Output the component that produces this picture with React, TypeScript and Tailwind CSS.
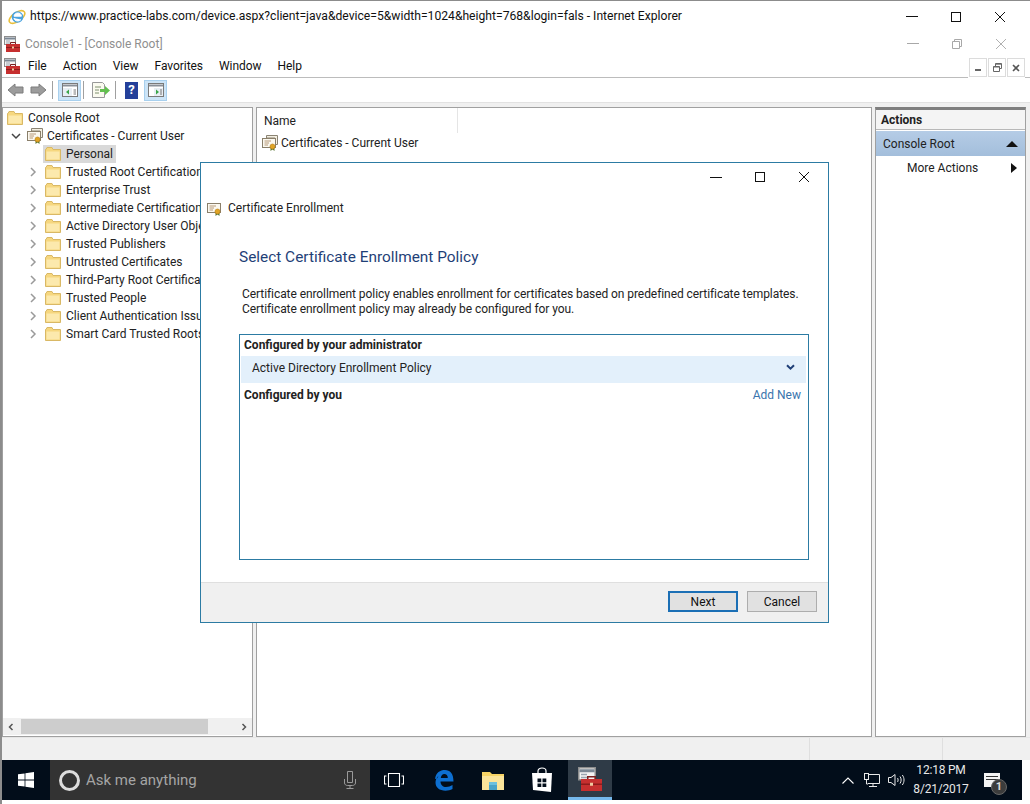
import React from 'react';

const treeItems = [
  'Trusted Root Certification',
  'Enterprise Trust',
  'Intermediate Certification',
  'Active Directory User Obje',
  'Trusted Publishers',
  'Untrusted Certificates',
  'Third-Party Root Certifica',
  'Trusted People',
  'Client Authentication Issu',
  'Smart Card Trusted Roots',
];

const Folder = () => (
  <svg width="16" height="14" viewBox="0 0 16 14" className="shrink-0">
    <path d="M.5 2.5V13.5H15.5V2.5H8L7 .5H2L1 2.5Z" fill="#f6d77f" stroke="#d9b865" />
    <path d="M1.5 4.5H14.5V12.5H1.5Z" fill="#fce9ad" />
  </svg>
);

const Cert = ({ stacked = false }: { stacked?: boolean }) => (
  <svg width="16" height="16" viewBox="0 0 16 16" className="shrink-0">
    {stacked && <path d="M4.5 .5H15.5V9.5H13V3H4.5Z" fill="#f4efe2" stroke="#8a8373" />}
    <rect x=".5" y="3.5" width="13" height="9" fill="#fbf8ef" stroke="#8a7f6a" />
    <path d="M2.5 6H9M2.5 8H7M2.5 10H6" stroke="#b79a7a" />
    <path d="M8.5 12.5V16L10.5 14.5L12.5 16V12.5Z" fill="#5d7a3a" />
    <circle cx="10.5" cy="11.5" r="2.5" fill="#e0a526" stroke="#b87c14" strokeWidth=".6" />
  </svg>
);

const Chevron = ({ open = false }: { open?: boolean }) => (
  <svg width="10" height="10" viewBox="0 0 10 10" className="shrink-0">
    <path d={open ? 'M1 3L5 7L9 3' : 'M3 1L7 5L3 9'} fill="none" stroke={open ? '#444' : '#9a9a9a'} strokeWidth="1.5" />
  </svg>
);

const Toolbox = ({ size = 16 }: { size?: number }) => (
  <svg width={size} height={size} viewBox="0 0 16 16" className="shrink-0">
    <rect x="0.5" y="0.5" width="11" height="8" fill="#f3f3f3" stroke="#8d8d8d" />
    <path d="M1 2.5H11" stroke="#7a8794" strokeWidth="2" />
    <path d="M2 5H6M2 7H6" stroke="#9aa5b0" />
    <path d="M6.5 8V6.5H11.5V8" fill="none" stroke="#7a1f1f" />
    <rect x="2" y="8" width="14" height="8" fill="#c62f2f" />
    <path d="M2 11.5H16" stroke="#8d1c1c" />
    <rect x="8" y="10.5" width="2" height="2" fill="#f0c9a0" />
  </svg>
);

const PanelIcon = ({ mirror = false }: { mirror?: boolean }) => (
  <div className="w-[23px] h-[21px] bg-[#cce4f7] border border-[#a8d0ee] flex items-center justify-center shrink-0">
    <svg width="16" height="14" viewBox="0 0 16 14">
      <rect x=".5" y=".5" width="15" height="13" fill="#fff" stroke="#7a7a7a" />
      <path d="M1 2.5H15" stroke="#8a9099" strokeWidth="2" />
      <path d={mirror ? 'M6 5H15V13H6Z' : 'M1 5H10V13H1Z'} fill="#e8eef4" />
      <path d={mirror ? 'M8 6.5L11 9L8 11.5Z' : 'M7 6.5L4 9L7 11.5Z'} fill="#3aa648" />
      <path d={mirror ? 'M12 7H14M12 9H14M12 11H14' : 'M11.5 7H14M11.5 9H14M11.5 11H14'} stroke="#777" />
    </svg>
  </div>
);

const Arrow = ({ right = false }: { right?: boolean }) => (
  <svg width="17" height="14" viewBox="0 0 17 14" className="shrink-0">
    <path
      d={right ? 'M1 4H9V1L16 7L9 13V10H1Z' : 'M16 4H8V1L1 7L8 13V10H16Z'}
      fill="#9c9c9c"
      stroke="#7d7d7d"
    />
  </svg>
);

const CaptionX = ({ color = '#111' }: { color?: string }) => (
  <svg width="12" height="12" viewBox="0 0 12 12">
    <path d="M1 1L11 11M11 1L1 11" stroke={color} strokeWidth="1" />
  </svg>
);

export default function App() {
  return (
    <div
      className="relative w-[1030px] h-[804px] overflow-hidden bg-white flex flex-col text-[12px] text-[#222] border-l-2 border-t border-[#8c8c8c]"
      style={{ fontFamily: 'Roboto, "Noto Sans", sans-serif' }}
    >
      {/* IE title bar */}
      <div className="h-[31px] shrink-0 flex items-center pl-[6px] pr-[24px] text-[#111]">
        <svg width="18" height="18" viewBox="0 0 18 18" className="shrink-0">
          <ellipse cx="9" cy="9" rx="9" ry="4.5" transform="rotate(-35 9 9)" fill="none" stroke="#e9bf3c" strokeWidth="1.6" />
          <circle cx="9.5" cy="9" r="5.8" fill="#4aa3e0" />
          <path d="M6 8.2H13.4C13.2 5.9 11.8 5 9.7 5C7.8 5 6.2 6.4 6 8.2ZM6 10C6.2 12 7.8 13 9.6 13C11 13 12 12.5 13 11.5" fill="#fff" stroke="#fff" />
          <rect x="7.5" y="9" width="6" height="1.2" fill="#4aa3e0" />
        </svg>
        <span className="ml-[4px] text-[12.15px] whitespace-nowrap">
          https://www.practice-labs.com/device.aspx?client=java&amp;device=5&amp;width=1024&amp;height=768&amp;login=fals - Internet Explorer
        </span>
        <div className="ml-auto flex items-center gap-[33px]">
          <div className="w-[12px] h-px bg-[#111]" />
          <div className="w-[10px] h-[10px] border border-[#111]" />
          <CaptionX />
        </div>
      </div>

      {/* MMC title */}
      <div className="h-[23px] shrink-0 flex items-center pl-[2px] pr-[23px]">
        <Toolbox />
        <span className="ml-[5px] text-[#8f8f8f]">Console1 - [Console Root]</span>
        <div className="ml-auto flex items-center gap-[33px]">
          <div className="w-[12px] h-px bg-[#a8a8a8]" />
          <svg width="10" height="10" viewBox="0 0 10 10">
            <path d="M.5 2.5H7.5V9.5H.5ZM2.5 2.5V.5H9.5V7.5H7.5" fill="none" stroke="#a8a8a8" />
          </svg>
          <CaptionX color="#b0b0b0" />
        </div>
      </div>

      {/* Menu */}
      <div className="h-[23px] shrink-0 flex items-center pl-[2px] border-b border-[#bcbcbc] relative">
        <Toolbox />
        <div className="ml-[8px] flex gap-[16px] text-[#111] tracking-[-0.05px]">
          <span>File</span>
          <span>Action</span>
          <span>View</span>
          <span>Favorites</span>
          <span>Window</span>
          <span>Help</span>
        </div>
        <div className="absolute right-[5px] top-[1px] h-[23px] flex items-center gap-[1px] bg-white pl-[1px]">
          <div className="w-[18px] h-[19px] border border-[#dcdcdc] flex items-end justify-center pb-[5px]">
            <div className="w-[6px] h-[2px] bg-[#666]" />
          </div>
          <div className="w-[18px] h-[19px] border border-[#dcdcdc] flex items-center justify-center">
            <svg width="9" height="9" viewBox="0 0 9 9">
              <path d="M.5 3.5H6.5V8.5H.5ZM2.5 3V.5H8.5V5.5H6.5M.5 4H6.5M2.5 1.2H8.5" fill="none" stroke="#666" />
            </svg>
          </div>
          <div className="w-[18px] h-[19px] border border-[#dcdcdc] flex items-center justify-center">
            <svg width="8" height="8" viewBox="0 0 8 8">
              <path d="M1 1L7 7M7 1L1 7" stroke="#555" strokeWidth="1.6" />
            </svg>
          </div>
        </div>
      </div>

      {/* Toolbar */}
      <div className="h-[25px] shrink-0 flex items-center pl-[5px] border-b border-[#e2e2e2]">
        <Arrow />
        <div className="ml-[6px]"><Arrow right /></div>
        <div className="ml-[5px] w-px h-[18px] bg-[#a0a0a0]" />
        <div className="ml-[5px]"><PanelIcon /></div>
        <div className="ml-[2px] w-px h-[18px] bg-[#a0a0a0]" />
        <svg width="18" height="16" viewBox="0 0 18 16" className="ml-[8px]">
          <path d="M.5 .5H10.5L12.5 2.5V15.5H.5Z" fill="#fbfbf0" stroke="#999" />
          <path d="M3 5H9M3 8H7M3 11H7" stroke="#7f8f6f" />
          <path d="M8 7H13V4L18 8.5L13 13V10H8Z" fill="#63c04f" />
        </svg>
        <div className="ml-[5px] w-px h-[18px] bg-[#a0a0a0]" />
        <div className="ml-[9px] w-[13px] h-[17px] bg-[#24409a] flex items-center justify-center text-white font-bold text-[13px]">?</div>
        <div className="ml-[6px]"><PanelIcon mirror /></div>
      </div>

      {/* Panes */}
      <div className="h-[634px] shrink-0 pt-[4px] flex gap-[3px] bg-[#f0f0f0] pr-[3px]">
        <div className="w-[251px] border border-[#a0a0a0] bg-white flex flex-col">
          <div className="flex-1 whitespace-nowrap pt-px">
            <div className="h-[18px] flex items-center pl-[4px] gap-[5px]">
              <Folder />
              <span>Console Root</span>
            </div>
            <div className="h-[18px] flex items-center pl-[8px]">
              <Chevron open />
              <div className="ml-[6px]"><Cert stacked /></div>
              <span className="ml-[4px]">Certificates - Current User</span>
            </div>
            <div className="h-[18px] flex items-center pl-[40px]">
              <div className="h-[18px] flex items-center gap-[5px] pl-[2px] pr-[3px] bg-[#d9d9d9]">
                <Folder />
                <span>Personal</span>
              </div>
            </div>
            {treeItems.map((name) => (
              <div key={name} className="h-[18px] flex items-center pl-[25px]">
                <Chevron />
                <div className="ml-[7px]"><Folder /></div>
                <span className="ml-[5px]">{name}</span>
              </div>
            ))}
          </div>
          <div className="h-[17px] mb-[1px] bg-[#f0f0f0] flex items-center justify-between px-[4px] relative">
            <svg width="8" height="8" viewBox="0 0 8 8"><path d="M5.5 1L2.5 4L5.5 7" fill="none" stroke="#555" strokeWidth="1.5" /></svg>
            <div className="absolute left-[18px] w-[187px] h-[15px] top-[1px] bg-[#cdcdcd]" />
            <svg width="8" height="8" viewBox="0 0 8 8"><path d="M2.5 1L5.5 4L2.5 7" fill="none" stroke="#555" strokeWidth="1.5" /></svg>
          </div>
        </div>

        <div className="w-[616px] border border-[#a0a0a0] bg-white">
          <div className="h-[25px] flex items-center pl-[7px]">
            <span className="w-[194px] h-full flex items-center border-r border-[#e5e5e5]">Name</span>
          </div>
          <div className="h-[18px] mt-px flex items-center pl-[5px] gap-[3px]">
            <Cert stacked />
            <span>Certificates - Current User</span>
          </div>
        </div>

        <div className="w-[151px] border border-[#a0a0a0] border-t-[3px] border-t-[#7f7f7f] bg-white">
          <div className="h-[20px] flex items-center pl-[5px] font-bold bg-[#f4f4f4] border-b border-[#b8b8b8]">Actions</div>
          <div className="mt-px h-[25px] flex items-center justify-between pl-[7px] pr-[7px] bg-gradient-to-b from-[#b5cce6] to-[#a3bedb]">
            <span>Console Root</span>
            <svg width="12" height="6" viewBox="0 0 12 6"><path d="M6 0L12 6H0Z" fill="#111" /></svg>
          </div>
          <div className="h-[23px] flex items-center justify-between pl-[31px] pr-[8px]">
            <span>More Actions</span>
            <svg width="6" height="10" viewBox="0 0 6 10"><path d="M0 0L6 5L0 10Z" fill="#111" /></svg>
          </div>
        </div>
      </div>

      {/* Status bar */}
      <div className="h-[23px] shrink-0 bg-[#f0f0f0] flex justify-end pr-[3px] border-t border-[#e6e6e6]">
        <div className="w-[134px] border-l border-r border-[#dfdfdf]" />
        <div className="w-[84px]" />
      </div>

      {/* Taskbar */}
      <div className="h-[40px] shrink-0 mr-[8px] bg-[#020d1a] flex items-center text-white">
        <div className="w-[48px] flex justify-center">
          <svg width="16" height="16" viewBox="0 0 16 16"><path d="M0 2.3L6.6 1.4V7.6H0ZM7.4 1.3L16 0V7.6H7.4ZM0 8.4H6.6V14.6L0 13.7ZM7.4 8.4H16V16L7.4 14.7Z" fill="#fff" /></svg>
        </div>
        <div className="w-[320px] h-full bg-[#333] flex items-center pl-[9px] pr-[14px]">
          <div className="w-[21px] h-[21px] rounded-full border-[3px] border-[#dcdcdc]" />
          <span className="ml-[6px] text-[15px] text-[#a5a5a5]">Ask me anything</span>
          <svg width="12" height="18" viewBox="0 0 12 18" className="ml-auto">
            <path d="M3.5 .5H8.5V11.5H3.5ZM.5 8V12C.5 13.5 2 14.5 3.5 14.5H8.5C10 14.5 11.5 13.5 11.5 12V8M6 14.5V17.5M2.5 17.5H9.5" fill="none" stroke="#9a9a9a" />
          </svg>
        </div>
        <div className="ml-[14px] w-[20px] flex justify-center">
          <svg width="20" height="16" viewBox="0 0 20 16"><path d="M4.5 1.5H15.5V14.5H4.5ZM2.5 4H.5V12H2.5M17.5 4H19.5V12H17.5" fill="none" stroke="#fff" strokeWidth="1.1" /></svg>
        </div>
        <div className="ml-[28px] w-[24px] flex justify-center">
          <svg width="20" height="22" viewBox="0 0 20 22">
            <path d="M1 10C2 3.5 6 1 11 1C16 1 19.5 4.5 19.5 12.5H6.5C6.5 16 9 18 12 18C14.5 18 16.5 17.3 18.5 16V20C16.5 21.2 14 21.7 11.5 21.7C5.5 21.7 1.5 18.5 1.5 13.5C1.5 11 2.5 8.5 5 6.5C4 7.8 3.5 8.5 3.2 9.2ZM6.8 9H13.8C13.8 6.5 12.3 5 10.3 5C8.3 5 7 6.7 6.8 9Z" fill="#0d6fd1" fillRule="evenodd" />
          </svg>
        </div>
        <div className="ml-[26px] w-[22px]">
          <svg width="22" height="20" viewBox="0 0 22 20">
            <path d="M0 2H8L10 4H22V20H0Z" fill="#f6d365" />
            <path d="M0 6H22V20H0Z" fill="#fbe49a" />
            <path d="M7 14H15V20H7Z" fill="#4aa3c8" />
            <path d="M7 12H15V15H7Z" fill="#6cc0de" />
          </svg>
        </div>
        <div className="ml-[27px] w-[22px]">
          <svg width="22" height="26" viewBox="0 0 22 26">
            <path d="M7 6V4C7 2 9 1 11 1C13 1 15 2 15 4V6" fill="none" stroke="#fff" strokeWidth="1.2" />
            <path d="M1 6H21L20 25L2 23Z" fill="#fff" />
            <path d="M6.5 11.5H10.3V15.2H6.5ZM11.5 11.5H15.3V15.2H11.5ZM6.5 16.4H10.3V20H6.5ZM11.5 16.4H15.3V20H11.5Z" fill="#020d1a" />
          </svg>
        </div>
        <div className="ml-[15px] w-[44px] h-full bg-[#2f3b47] border-b-[3px] border-[#76b9ed] flex items-center justify-center">
          <Toolbox size={24} />
        </div>
        <div className="ml-auto flex items-center text-[#e8e8e8]">
          <svg width="12" height="7" viewBox="0 0 12 7"><path d="M.5 6.5L6 1L11.5 6.5" fill="none" stroke="#fff" strokeWidth="1.1" /></svg>
          <svg width="16" height="14" viewBox="0 0 16 14" className="ml-[10px]">
            <path d="M4 1.5H15.5V10.5H4M9 10.5V13.5M5 13.5H13" fill="none" stroke="#e8e8e8" />
            <rect x=".5" y=".5" width="4" height="6" fill="#020d1a" stroke="#e8e8e8" />
            <path d="M2.5 6.5V11H4" fill="none" stroke="#e8e8e8" />
          </svg>
          <svg width="17" height="14" viewBox="0 0 17 14" className="ml-[8px]">
            <path d="M.5 4.5H3L7 1.5V12.5L3 9.5H.5Z" fill="none" stroke="#e8e8e8" />
            <path d="M9.5 5C10.3 6 10.3 8 9.5 9M12 3.5C13.5 5.5 13.5 8.5 12 10.5M14.3 2C16.6 5 16.6 9 14.3 12" fill="none" stroke="#e8e8e8" />
          </svg>
          <div className="ml-[5px] w-[62px] flex flex-col items-center leading-[19px] text-[12px] tracking-[-0.2px] whitespace-nowrap">
            <span>12:18 PM</span>
            <span>8/21/2017</span>
          </div>
          <div className="ml-[12px] mr-[22px] relative w-[16px] h-[14px] bg-[#f4f4f4]">
            <div className="mt-[3px] ml-[2px] w-[12px] h-px bg-[#333]" />
            <div className="mt-[2px] ml-[2px] w-[12px] h-px bg-[#333]" />
            <div className="absolute left-[7px] top-[6px] w-[16px] h-[16px] rounded-full bg-[#3c3c3c] border border-[#666] flex items-center justify-center text-[11px] font-bold text-[#ddd]">1</div>
          </div>
        </div>
      </div>

      {/* Certificate Enrollment dialog */}
      <div className="absolute left-[198px] top-[161px] w-[629px] h-[461px] bg-white border border-[#2c7ba3] flex flex-col">
        <div className="h-[28px] flex items-center justify-end pr-[18px] gap-[33px] shrink-0">
          <div className="w-[12px] h-px bg-[#111]" />
          <div className="w-[10px] h-[10px] border border-[#111]" />
          <CaptionX />
        </div>
        <div className="h-[34px] flex items-center pl-[6px] gap-[5px] shrink-0">
          <Cert />
          <span>Certificate Enrollment</span>
        </div>
        <div className="pl-[38px] pt-[21px] h-[56px] shrink-0 text-[15.4px] text-[#1f3f77]">Select Certificate Enrollment Policy</div>
        <div className="pl-[41px] pt-[6px] text-[#222] leading-[15px] whitespace-nowrap tracking-[-0.075px]">
          <p>Certificate enrollment policy enables enrollment for certificates based on predefined certificate templates.</p>
          <p>Certificate enrollment policy may already be configured for you.</p>
        </div>
        <div className="ml-[38px] mt-[17px] w-[570px] h-[226px] border border-[#2c7ba3] px-px pt-[2px]">
          <div className="h-[19px] pl-[3px] pb-[4px] flex items-center font-bold">Configured by your administrator</div>
          <div className="h-[27px] w-[565px] bg-[#e3f0fb] flex items-center justify-between pl-[11px] pr-[11px] pb-[4px]">
            <span>Active Directory Enrollment Policy</span>
            <svg width="9" height="7" viewBox="0 0 9 7"><path d="M1 1.2L4.5 4.7L8 1.2" fill="none" stroke="#1f3f77" strokeWidth="2" /></svg>
          </div>
          <div className="h-[23px] pl-[3px] pr-[6px] flex items-center justify-between">
            <span className="font-bold">Configured by you</span>
            <span className="text-[#3a74ad]">Add New</span>
          </div>
        </div>
        <div className="mt-auto h-[40px] bg-[#f0f0f0] border-t border-[#dfdfdf] flex items-center justify-end gap-[9px] pr-[11px] pb-[2px]">
          <button className="w-[70px] h-[21px] bg-[#e1e1e1] border-2 border-[#1b6fb5] text-[#111]">Next</button>
          <button className="w-[70px] h-[21px] bg-[#e1e1e1] border border-[#adadad] text-[#111]">Cancel</button>
        </div>
      </div>
    </div>
  );
}
